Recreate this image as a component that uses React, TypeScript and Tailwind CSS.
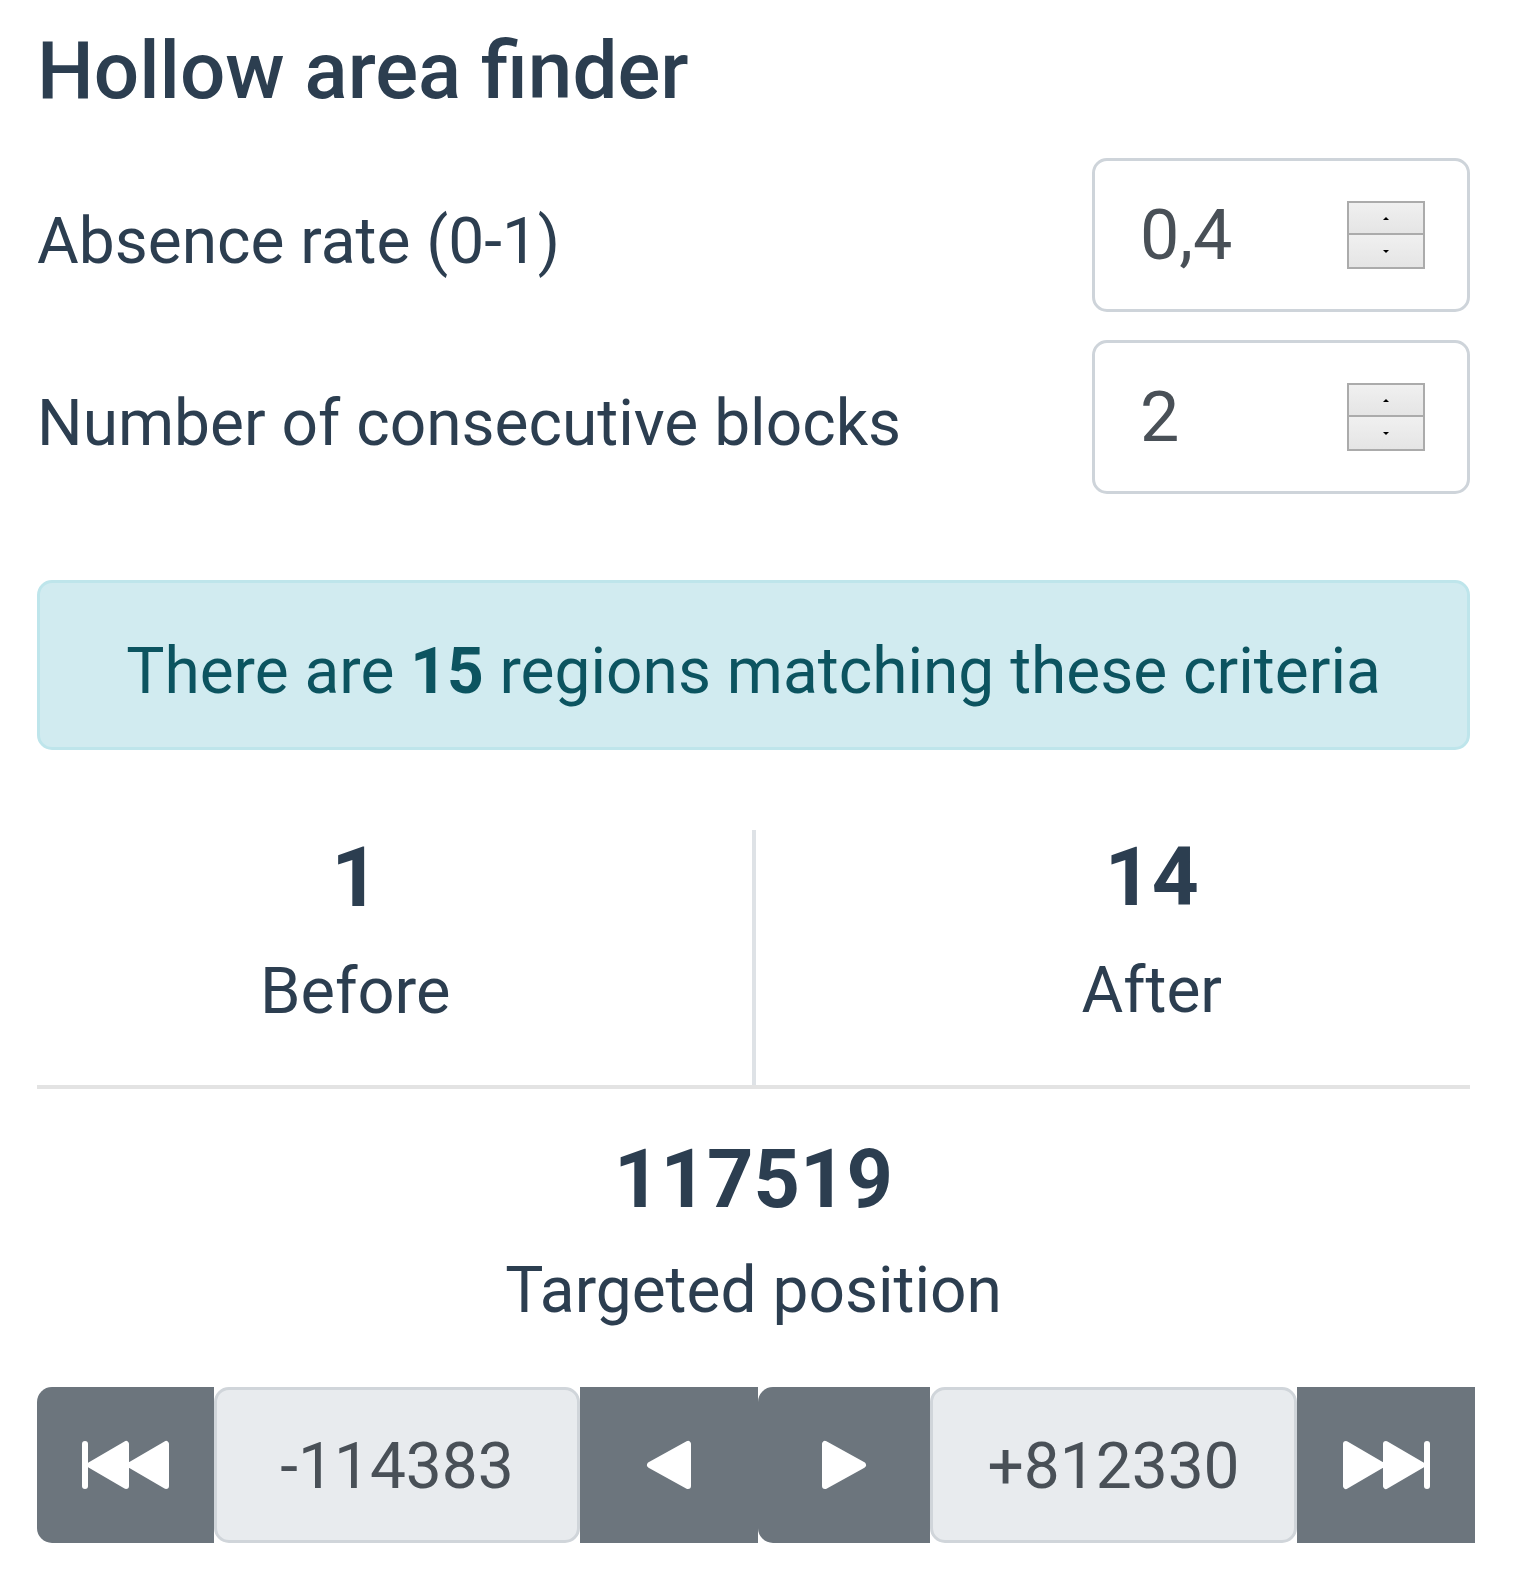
import React from "react";

function Spinner() {
  return (
    <div className="flex h-[68px] w-[78px] flex-col">
      <div className="flex h-[34px] w-full items-center justify-center border-2 border-[#ababab] bg-gradient-to-b from-[#f0f0f0] to-[#e5e5e5]">
        <div className="h-0 w-0 border-x-[3px] border-b-[3px] border-x-transparent border-b-black" />
      </div>
      <div className="-mt-[2px] flex h-[36px] w-full items-center justify-center border-2 border-[#ababab] bg-gradient-to-b from-[#f0f0f0] to-[#e5e5e5]">
        <div className="h-0 w-0 border-x-[3px] border-t-[3px] border-x-transparent border-t-black" />
      </div>
    </div>
  );
}

function NumInput({ value }: { value: string }) {
  return (
    <div className="flex h-[154px] w-[378px] items-center justify-between rounded-[15px] border-[3px] border-[#ced4da] pl-[45px] pr-[42px]">
      <span className="text-[70px] leading-none text-[#495057]">{value}</span>
      <Spinner />
    </div>
  );
}

function Tri({ dir }: { dir: "left" | "right" }) {
  return (
    <svg width="46" height="50" viewBox="0 0 46 50">
      {dir === "left" ? (
        <polygon points="4,25 42,4 42,46" fill="white" stroke="white" strokeWidth="6" strokeLinejoin="round" />
      ) : (
        <polygon points="42,25 4,4 4,46" fill="white" stroke="white" strokeWidth="6" strokeLinejoin="round" />
      )}
    </svg>
  );
}

function SkipBack() {
  return (
    <svg width="88" height="50" viewBox="0 0 88 50">
      <rect x="0" y="1" width="6" height="48" rx="3" fill="white" />
      <polygon points="8,25 44,4 44,46" fill="white" stroke="white" strokeWidth="6" strokeLinejoin="round" />
      <polygon points="48,25 84,4 84,46" fill="white" stroke="white" strokeWidth="6" strokeLinejoin="round" />
    </svg>
  );
}

function SkipFwd() {
  return (
    <svg width="88" height="50" viewBox="0 0 88 50">
      <polygon points="4,4 40,25 4,46" fill="white" stroke="white" strokeWidth="6" strokeLinejoin="round" />
      <polygon points="44,4 80,25 44,46" fill="white" stroke="white" strokeWidth="6" strokeLinejoin="round" />
      <rect x="82" y="1" width="6" height="48" rx="3" fill="white" />
    </svg>
  );
}

export default function App() {
  return (
    <div className="min-h-[1584px] w-[1520px] bg-white font-['Roboto',sans-serif] text-[#2c3e50]">
      <div className="box-content w-[1433px] pl-[37px] pt-[31px]">
        <h2 className="text-[80px] font-medium leading-none">Hollow area finder</h2>

        <div className="mt-[47px] flex items-center justify-between">
          <span className="pt-[14px] text-[64px] leading-none">Absence rate (0-1)</span>
          <NumInput value="0,4" />
        </div>
        <div className="mt-[28px] flex items-center justify-between">
          <span className="pt-[14px] text-[64px] leading-none">Number of consecutive blocks</span>
          <NumInput value="2" />
        </div>

        <div className="mt-[86px] flex h-[170px] items-center justify-center rounded-[15px] border-[3px] border-[#bee5eb] bg-[#d1ebf0] pt-[14px] text-[64px] leading-none text-[#0c5460]">
          <span>
            There are <b className="font-bold">15</b> regions matching these criteria
          </span>
        </div>

        <div className="mt-[80px] flex h-[259px] border-b-[4px] border-[#e3e3e3]">
          <div className="flex flex-1 flex-col items-center border-r-[4px] border-[#dee2e6] pr-[78px] pt-[6px]">
            <div className="text-[84px] font-bold leading-none">1</div>
            <div className="mt-[39px] text-[65px] leading-none">Before</div>
          </div>
          <div className="flex flex-1 flex-col items-center pl-[78px] pt-[6px]">
            <div className="text-[82px] font-bold leading-none">14</div>
            <div className="mt-[41px] text-[64px] leading-none">After</div>
          </div>
        </div>

        <div className="mt-[50px] flex flex-col items-center">
          <div className="text-[81px] font-bold leading-none">117519</div>
          <div className="mt-[39px] text-[64px] leading-none">Targeted position</div>
        </div>

        <div className="mt-[64px] flex h-[156px] w-[1438px]">
          <div className="flex w-[177px] items-center justify-center rounded-l-[15px] bg-[#6c757d]">
            <SkipBack />
          </div>
          <div className="flex w-[366px] items-center justify-center rounded-[15px] border-[3px] border-[#d0d5da] bg-[#e8ebee] pt-[4px] text-[64px] leading-none text-[#495057]">
            -114383
          </div>
          <div className="flex w-[178px] items-center justify-center bg-[#6c757d]">
            <Tri dir="left" />
          </div>
          <div className="flex w-[172px] items-center justify-center rounded-l-[15px] bg-[#6c757d]">
            <Tri dir="right" />
          </div>
          <div className="flex w-[367px] items-center justify-center rounded-[15px] border-[3px] border-[#d0d5da] bg-[#e8ebee] pt-[4px] text-[64px] leading-none text-[#495057]">
            +812330
          </div>
          <div className="flex w-[178px] items-center justify-center bg-[#6c757d]">
            <SkipFwd />
          </div>
        </div>
      </div>
    </div>
  );
}
